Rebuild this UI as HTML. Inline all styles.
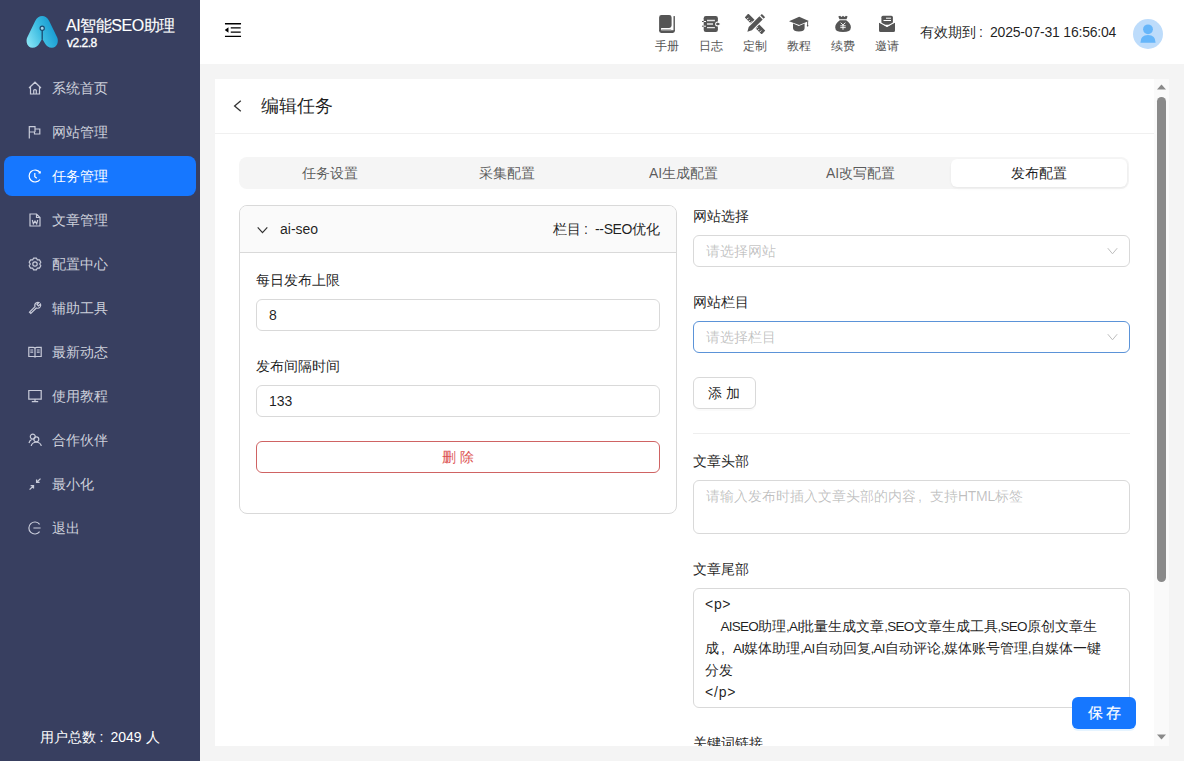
<!DOCTYPE html>
<html><head><meta charset="utf-8">
<style>
*{box-sizing:border-box;margin:0;padding:0}
html,body{width:1184px;height:761px;overflow:hidden;background:#f4f4f4;font-family:"Liberation Sans",sans-serif;font-size:14px;color:rgba(0,0,0,.88)}
.a{position:absolute;white-space:nowrap}
#side{position:absolute;left:0;top:0;width:200px;height:761px;background:#383f60}
#logo{position:absolute;left:26px;top:16px;width:32px;height:32px}
#brand{position:absolute;left:66px;top:16px;color:#fff;font-size:16px;line-height:20px;white-space:nowrap;font-weight:500;-webkit-text-stroke:0.15px #fff;letter-spacing:-0.45px}
#ver{position:absolute;left:67px;top:36px;color:#fff;font-size:12px;line-height:14px;-webkit-text-stroke:0.35px #fff;letter-spacing:-0.5px}
.mi{position:absolute;left:4px;width:192px;height:40px;border-radius:8px;color:#cdd0db}
.mi svg{position:absolute;left:24px;top:13px;width:14px;height:14px;fill:none;stroke:#c8cbd9;stroke-width:1.2}
.mi .tx{position:absolute;left:48px;top:0;line-height:40px;font-size:14px;white-space:nowrap}
.mi.act{background:#1677ff;color:#fff}
.mi.act svg{stroke:#fff}
#users{position:absolute;left:0;width:200px;top:727px;text-align:center;color:#fff;font-size:14px;line-height:20px}
#hdr{position:absolute;left:200px;top:0;width:984px;height:64px;background:#fff}
.hl{position:absolute;top:38px;width:40px;text-align:center;font-size:12px;line-height:16px;color:#555}
.hi{position:absolute;top:13px;width:40px;height:44px;text-align:center}
.hi svg{position:absolute;left:10px;top:0;width:20px;height:20px;fill:#555}
.hi span{position:absolute;left:0;width:40px;top:24px;font-size:12px;line-height:16px;color:#555}
#exp{position:absolute;left:920px;top:22px;font-size:14px;line-height:20px;color:rgba(0,0,0,.88);white-space:nowrap}
#card{position:absolute;left:215px;top:79px;width:939px;height:667px;background:#fff;overflow:hidden}
#sb{position:absolute;left:1154px;top:79px;width:15px;height:667px;background:#fafafa}
.lbl{position:absolute;font-size:14px;line-height:22px;color:rgba(0,0,0,.88);white-space:nowrap}
.inp{position:absolute;height:32px;border:1px solid #d9d9d9;border-radius:6px;background:#fff;font-size:14px;line-height:30px;padding-left:12px;color:rgba(0,0,0,.88);white-space:nowrap}
.ph{color:rgba(0,0,0,.25)}
.chev{position:absolute;right:11px;top:11px;width:11px;height:8px}
.seg{top:78px;height:32px;line-height:32px;text-align:center;color:rgba(0,0,0,.65)}
#save{position:absolute;left:1072px;top:697px;width:64px;height:32px;background:#1677ff;border-radius:6px;color:#fff;text-align:center;line-height:32px;font-size:15px;letter-spacing:3px;padding-left:3px;font-weight:500;-webkit-text-stroke:0.2px #fff;box-shadow:0 2px 0 rgba(5,145,255,.1)}
i{font-style:normal;letter-spacing:-0.75px;font-size:13.5px;line-height:14px}
</style></head><body>
<div id="side">
  <svg id="logo" style="left:0;top:0;width:70px;height:60px" viewBox="0 0 70 60">
    <defs><linearGradient id="lg" gradientUnits="userSpaceOnUse" x1="26" y1="44" x2="58" y2="30"><stop offset="0" stop-color="#8fe8f7"/><stop offset="0.5" stop-color="#3dbde2"/><stop offset="1" stop-color="#1295cf"/></linearGradient></defs>
    <path d="M42.2 15.9 C45 15.9 47.5 17.5 49.2 21 L57.2 37.5 C59 41.5 57 47.8 52 47.8 C48.5 47.8 46.5 46 45 43.5 L42.2 38.8 L39.4 43.5 C37.9 46 35.9 47.8 32.4 47.8 C27.4 47.8 25.4 41.5 27.2 37.5 L35.2 21 C36.9 17.5 39.4 15.9 42.2 15.9 Z" fill="url(#lg)"/>
    <line x1="42.2" y1="30" x2="42.2" y2="39.6" stroke="#1b4a70" stroke-width="1.3"/>
    <circle cx="42.2" cy="28.2" r="2.1" fill="#a6d5ea" stroke="#1b4a70" stroke-width="1.2"/>
  </svg>
  <div id="brand">AI智能SEO助理</div>
  <div id="ver">v2.2.8</div>
  <div class="mi" style="top:68px"><svg viewBox="0 0 14 14"><path d="M1 7 L7 1.2 L13 7 M2.5 5.8 V13 H11.5 V5.8 M5.7 13 V9.2 Q7 8 8.3 9.2 V13"/></svg><span class="tx">系统首页</span></div>
  <div class="mi" style="top:112px"><svg viewBox="0 0 14 14"><path d="M1.3 1 V13.5 M1.3 1.7 H7 V4 H11.8 V9 H6.5 V7 H1.3 M7 4 V7"/></svg><span class="tx">网站管理</span></div>
  <div class="mi act" style="top:156px"><svg viewBox="0 0 14 14"><path d="M12 3.5 A6 6 0 1 0 12 10.5 M12.2 2.2 V4 H10.4 M6.8 4 V7.8 L8.8 9.3"/></svg><span class="tx">任务管理</span></div>
  <div class="mi" style="top:200px"><svg viewBox="0 0 14 14"><path d="M2 1 H8.5 L12 4.5 V13 H2 Z M8.5 1 V4.5 H12 M4.3 7 L5.3 10.8 L7 8.2 L8.7 10.8 L9.7 7"/></svg><span class="tx">文章管理</span></div>
  <div class="mi" style="top:244px"><svg viewBox="0 0 14 14"><path d="M4.65 2.93 L5.63 1.06 L8.37 1.06 L9.35 2.93 L11.46 2.84 L12.83 5.22 L11.70 7.00 L12.83 8.78 L11.46 11.16 L9.35 11.07 L8.37 12.94 L5.63 12.94 L4.65 11.07 L2.54 11.16 L1.17 8.78 L2.30 7.00 L1.17 5.22 L2.54 2.84 Z" stroke-linejoin="round"/><circle cx="7" cy="7" r="2.2"/></svg><span class="tx">配置中心</span></div>
  <div class="mi" style="top:288px"><svg viewBox="0 0 14 14"><path d="M1.5 11.2 L7 5.7 Q6.2 3.2 8 1.9 Q9.5 0.9 11 1.5 L9 3.5 L10.5 5 L12.5 3 Q13.1 4.5 12.1 6 Q10.8 7.8 8.3 7 L2.8 12.5 Z"/></svg><span class="tx">辅助工具</span></div>
  <div class="mi" style="top:332px"><svg viewBox="0 0 14 14"><path d="M0.8 2.3 H5.3 Q7 2.3 7 3.8 Q7 2.3 8.7 2.3 H13.2 V11.5 H8.5 Q7 11.5 7 12.6 Q7 11.5 5.5 11.5 H0.8 Z M7 3.8 V12.3 M2.3 5 H5.2 M2.3 7.2 H5.2 M8.8 5 H11.7 M8.8 7.2 H11.7"/></svg><span class="tx">最新动态</span></div>
  <div class="mi" style="top:376px"><svg viewBox="0 0 14 14"><path d="M0.8 1.5 H13.2 V10.2 H0.8 Z M7 10.2 V12.2 M3.8 12.6 H10.2"/></svg><span class="tx">使用教程</span></div>
  <div class="mi" style="top:420px"><svg viewBox="0 0 14 14"><circle cx="4.8" cy="3.6" r="2.5"/><circle cx="8.3" cy="6.3" r="2.5"/><path d="M1 10 Q1.6 7.5 3.6 6.5 M3.2 13 Q3.8 9.5 8.3 9 Q12.6 9.5 13.3 13"/></svg><span class="tx">合作伙伴</span></div>
  <div class="mi" style="top:464px"><svg viewBox="0 0 14 14" style="stroke-width:1.3"><path d="M1.6 12.6 L5 9.2 M2.6 8.7 H5.5 V11.6 M12.5 1.6 L9 5 M8.6 2.4 V5.4 H11.6"/></svg><span class="tx">最小化</span></div>
  <div class="mi" style="top:508px"><svg viewBox="0 0 14 14"><path d="M11.6 3.3 A6 6 0 1 0 11.6 10.7 M5.4 7 H12.6"/></svg><span class="tx">退出</span></div>
  <div id="users">用户总数<span style="display:inline-block;width:14px;padding-left:3px;text-align:left">:</span>2049 人</div>
</div>
<div id="hdr">
  <svg class="a" style="left:24px;top:21px;width:18px;height:18px" viewBox="64 64 896 896" fill="#000"><path d="M408 442h480c4.4 0 8-3.6 8-8v-56c0-4.4-3.6-8-8-8H408c-4.4 0-8 3.6-8 8v56c0 4.4 3.6 8 8 8zm-8 204c0 4.4 3.6 8 8 8h480c4.4 0 8-3.6 8-8v-56c0-4.4-3.6-8-8-8H408c-4.4 0-8 3.6-8 8v56zm504-486H120c-4.4 0-8 3.6-8 8v56c0 4.4 3.6 8 8 8h784c4.4 0 8-3.6 8-8v-56c0-4.4-3.6-8-8-8zm0 632H120c-4.4 0-8 3.6-8 8v56c0 4.4 3.6 8 8 8h784c4.4 0 8-3.6 8-8v-56c0-4.4-3.6-8-8-8zM115.4 518.9L271.7 642c5.8 4.6 14.4.5 14.4-6.9V388.9c0-7.4-8.5-11.5-14.4-6.9L115.4 505.1a8.71 8.71 0 000 13.8z"/></svg>
  <svg class="a" style="left:0;top:0;width:984px;height:64px" viewBox="200 0 984 64">
    <g fill="#555">
      <path d="M661.5 15.1 H669.2 Q671.6 15.1 671.6 17.5 V25.5 Q671.6 27.9 669.2 27.9 H661.1 V31 H659.1 V17.5 Q659.1 15.1 661.5 15.1 Z"/>
      <path d="M659.1 30.3 H674.9 V30.8 Q674.9 32.9 672.8 32.9 H661.2 Q659.1 32.9 659.1 30.8 Z"/>
      <rect x="673.5" y="16.1" width="1.4" height="15"/>
      <rect x="661.4" y="29" width="9.8" height="1.2" fill="#bdbdbd"/>
      <rect x="703.7" y="16" width="14.2" height="16" rx="2.2"/>
      <path d="M707 20.5 H714.9 M707 24 H713 M707 27.6 H714.9" stroke="#e6e6e6" stroke-width="1.3"/>
      <path d="M702 21.5 H706 M702 26.2 H706" stroke="#fff" stroke-width="1"/>
      <path d="M702 21.5 H703.8 M702 26.2 H703.8" stroke="#555" stroke-width="1"/>
      <circle cx="717.6" cy="24" r="2.5" fill="#fff"/>
      <circle cx="717.4" cy="24" r="1.3"/><path d="M717.6 22.5 L720.2 24 L717.6 25.5 Z"/>
      <g transform="rotate(-45 755 24)"><rect x="752.4" y="12" width="5.2" height="24" rx="0.6"/><path d="M752.3 15 H754.8 M752.3 17.5 H754.2 M752.3 20 H754.8 M752.3 28 H754.8 M752.3 30.5 H754.2 M752.3 33 H754.8" stroke="#fff" stroke-width="0.9"/></g>
      <g transform="rotate(45 755 24)" style="paint-order:stroke" stroke="#fff" stroke-width="2.2"><rect x="752.7" y="12" width="4.6" height="2.4"/><path d="M752.7 15.4 H757.3 V30.6 L755 34.8 L752.7 30.6 Z"/></g>
      <path d="M789 21.3 L799.2 16.8 L808.8 21 L799.2 25 Z"/>
      <path d="M793 23.6 V28.3 Q793.5 31.6 798.8 31.6 Q804.4 31.6 804.6 28.3 V23.6 L798.8 26 Z"/>
      <path d="M807.6 21.2 V25.6" stroke="#555" stroke-width="0.9"/>
      <path d="M806.8 25 H808.4 L808.1 26.4 H807.1 Z"/>
      <path d="M838.3 16.4 L840.1 15.8 L841.4 16.9 L843 15.8 L844.6 16.9 L845.9 15.8 L847.6 16.4 L846.5 19.2 H839.5 Z"/>
      <path d="M839.8 20.2 H846.2 Q851 23.5 850.9 27.4 Q850.7 32 843 32 Q835.3 32 835.2 27.4 Q835.1 23.5 839.8 20.2 Z"/>
      <path d="M840.6 22.7 L843 24.9 L845.4 22.7 M843 24.9 V29.8 M840.3 25.8 H845.7 M840.3 27.6 H845.7" stroke="#fff" stroke-width="0.9" fill="none"/>
      <rect x="881.4" y="15.8" width="11.5" height="9" rx="1.5"/>
      <path d="M886 18.2 H891 M883.5 20.5 H891" stroke="#fff" stroke-width="1"/>
      <path d="M879 22.3 L887 26.9 L895 22.3 V30.5 Q895 32 893.5 32 H880.5 Q879 32 879 30.5 Z"/>
      <path d="M878.6 21.7 L887 26.4 L895.4 21.7" stroke="#fff" stroke-width="1.1" fill="none"/>
    </g>
  </svg>
  <div class="hl" style="left:447px">手册</div>
  <div class="hl" style="left:491px">日志</div>
  <div class="hl" style="left:535px">定制</div>
  <div class="hl" style="left:579px">教程</div>
  <div class="hl" style="left:623px">续费</div>
  <div class="hl" style="left:667px">邀请</div>
  <div id="exp" class="a" style="left:720px">有效期到<span style="display:inline-block;width:14px;padding-left:3px;text-align:left">:</span><span style="letter-spacing:-0.2px">2025-07-31 16:56:04</span></div>
  <svg class="a" style="left:933px;top:19px;width:30px;height:30px" viewBox="0 0 30 30"><circle cx="15" cy="15" r="15" fill="#bddcfb"/><circle cx="15" cy="10.3" r="4.9" fill="#66b6fa"/><path d="M7.4 23.8 Q7.4 16 15 16 Q22.6 16 22.6 23.8 Z" fill="#66b6fa"/></svg>
</div>
<div id="card">
  <svg class="a" style="left:18px;top:21px;width:9px;height:12px" viewBox="0 0 9 12"><path d="M7.8 0.8 L1.6 6 L7.8 11.2" fill="none" stroke="#333" stroke-width="1.3"/></svg>
  <div class="a" style="left:46px;top:15px;font-size:18px;line-height:24px;color:rgba(0,0,0,.88)">编辑任务</div>
  <div class="a" style="left:0;top:54px;width:939px;height:1px;background:#f0f0f0"></div>
  <!-- segmented -->
  <div class="a" style="left:24px;top:78px;width:890px;height:32px;background:#f5f5f5;border-radius:8px"></div>
  <div class="a" style="left:736px;top:80px;width:176px;height:28px;background:#fff;border-radius:6px;box-shadow:0 1px 2px 0 rgba(0,0,0,.03),0 1px 6px -1px rgba(0,0,0,.02),0 2px 4px 0 rgba(0,0,0,.02)"></div>
  <div class="a seg" style="left:26px;width:177px">任务设置</div>
  <div class="a seg" style="left:203px;width:177px">采集配置</div>
  <div class="a seg" style="left:380px;width:177px">AI生成配置</div>
  <div class="a seg" style="left:557px;width:177px">AI改写配置</div>
  <div class="a seg" style="left:736px;width:176px;color:rgba(0,0,0,.88)">发布配置</div>
  <!-- left collapse -->
  <div class="a" style="left:24px;top:126px;width:438px;height:309px;border:1px solid #d9d9d9;border-radius:8px;overflow:hidden">
    <div class="a" style="left:0;top:0;width:436px;height:47px;background:#fafafa;border-bottom:1px solid #d9d9d9"></div>
    <svg class="a" style="left:17px;top:20px;width:11px;height:8px" viewBox="0 0 11 8"><path d="M0.7 1.3 L5.5 6.6 L10.3 1.3" fill="none" stroke="#333" stroke-width="1.2"/></svg>
    <div class="a" style="left:40px;top:12px;line-height:22px">ai-seo</div>
    <div class="a" style="right:16px;top:12px;line-height:22px">栏目<span style="display:inline-block;width:14px;padding-left:3px;text-align:left">:</span><span style="letter-spacing:-0.4px">--SEO</span>优化</div>
    <div class="lbl" style="left:16px;top:63px">每日发布上限</div>
    <div class="inp" style="left:16px;top:93px;width:404px">8</div>
    <div class="lbl" style="left:16px;top:149px">发布间隔时间</div>
    <div class="inp" style="left:16px;top:179px;width:404px">133</div>
    <div class="a" style="left:16px;top:235px;width:404px;height:32px;border:1px solid #cf6363;border-radius:6px;text-align:center;line-height:30px;color:#dc5252;letter-spacing:4px;padding-left:4px">删除</div>
  </div>
  <!-- right column -->
  <div class="lbl" style="left:478px;top:126px">网站选择</div>
  <div class="inp ph" style="left:478px;top:156px;width:437px">请选择网站<svg class="chev" viewBox="0 0 11 8"><path d="M0.8 1.2 L5.5 6.8 L10.2 1.2" fill="none" stroke="#bdbdbd" stroke-width="1"/></svg></div>
  <div class="lbl" style="left:478px;top:212px">网站栏目</div>
  <div class="inp ph" style="left:478px;top:242px;width:437px;border-color:#5b93d8">请选择栏目<svg class="chev" viewBox="0 0 11 8"><path d="M0.8 1.2 L5.5 6.8 L10.2 1.2" fill="none" stroke="#bdbdbd" stroke-width="1"/></svg></div>
  <div class="a" style="left:478px;top:298px;width:63px;height:32px;border:1px solid #d9d9d9;border-radius:6px;line-height:30px;padding-left:14px;letter-spacing:4px;box-shadow:0 2px 0 rgba(0,0,0,.02)">添加</div>
  <div class="a" style="left:478px;top:354px;width:437px;height:1px;background:#eeeeee"></div>
  <div class="lbl" style="left:478px;top:371px">文章头部</div>
  <div class="inp" style="left:478px;top:401px;width:437px;height:54px;line-height:22px;padding-top:4px;white-space:normal"><span class="ph">请输入发布时插入文章头部的内容<span style="display:inline-block;width:14px;padding-left:2px">,</span>支持<span style="letter-spacing:-0.3px">HTML</span>标签</span></div>
  <div class="lbl" style="left:478px;top:479px">文章尾部</div>
  <div class="inp" style="left:478px;top:509px;width:437px;height:120px;line-height:22px;padding:4px 11px;white-space:pre"><span style="letter-spacing:0.7px">&lt;p&gt;</span>
    <i>AISEO</i>助理<i>,AI</i>批量生成文章<i>,SEO</i>文章生成工具<i>,SEO</i>原创文章生
成<span style="display:inline-block;width:14px;padding-left:2px">,</span><i>AI</i>媒体助理<i>,AI</i>自动回复<i>,AI</i>自动评论<i>,</i>媒体账号管理<i>,</i>自媒体一键
分发
<span style="letter-spacing:0.8px">&lt;/p&gt;</span></div>
  <div class="lbl" style="left:478px;top:653px">关键词链接</div>
</div>
<div id="sb">
  <svg class="a" style="left:3px;top:5px;width:9px;height:6px" viewBox="0 0 9 6"><path d="M0 5.5 L4.5 0.5 L9 5.5 Z" fill="#8a8a8a"/></svg>
  <div class="a" style="left:3px;top:18px;width:9px;height:485px;background:#8a8a8a;border-radius:4.5px"></div>
  <svg class="a" style="left:3px;top:655px;width:9px;height:6px" viewBox="0 0 9 6"><path d="M0 0.5 L4.5 5.5 L9 0.5 Z" fill="#8a8a8a"/></svg>
</div>
<div id="save">保存</div>
</body></html>
